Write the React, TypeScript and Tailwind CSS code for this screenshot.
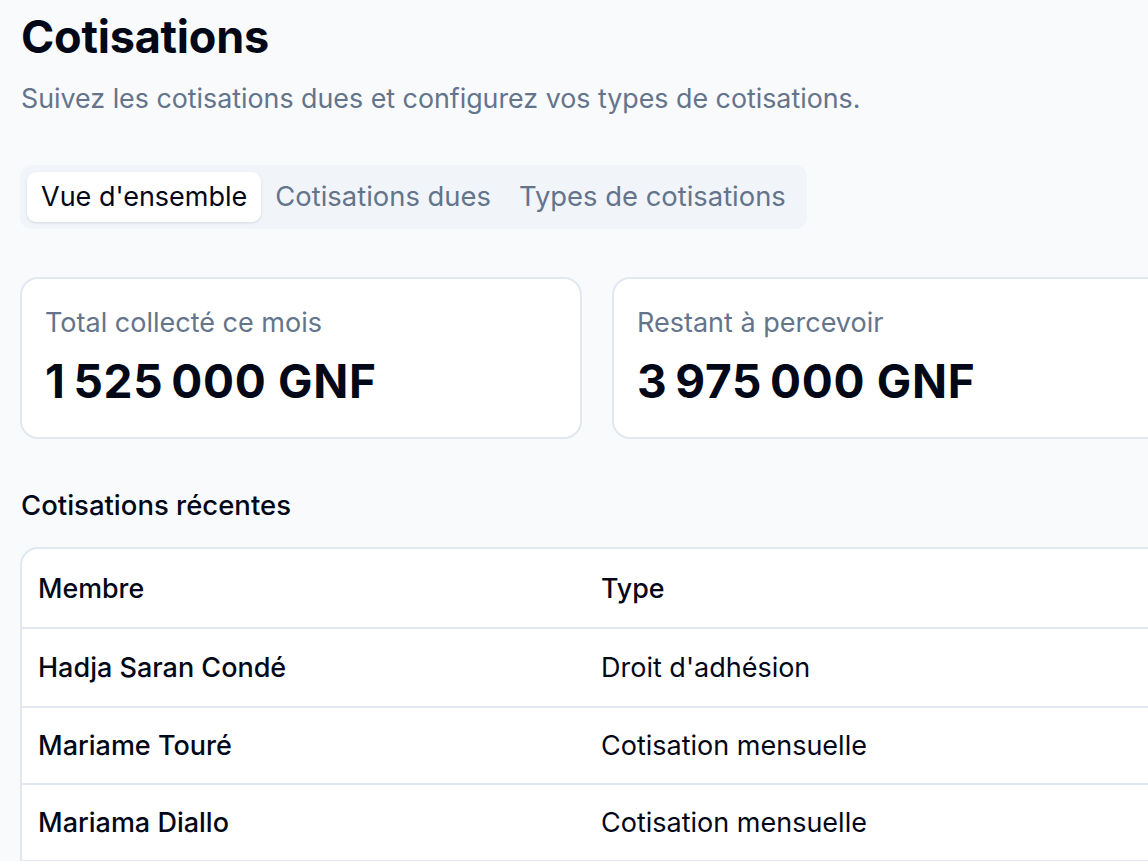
import React from "react";

const rows = [
  { name: "Hadja Saran Condé", type: "Droit d'adhésion", h: "h-[79px]" },
  { name: "Mariame Touré", type: "Cotisation mensuelle", h: "h-[77px]" },
  { name: "Mariama Diallo", type: "Cotisation mensuelle", h: "h-[77px]" },
];

function fmt(n: number) {
  return n.toLocaleString("fr-FR") + " GNF";
}

export default function App() {
  return (
    <div
      className="min-h-screen w-full overflow-hidden bg-[#f8fafc] text-[#020817]"
      style={{ fontFamily: "Inter, 'Noto Sans', sans-serif" }}
    >
      <div className="pl-[20px] pt-[9px] w-[1400px]">
        <h1 className="text-[45px] leading-[56px] font-bold tracking-[-0.005em] pl-[1px]">Cotisations</h1>
        <p className="mt-[15px] text-[26.8px] leading-[36px] text-[#64748b] pl-[1px]">
          Suivez les cotisations dues et configurez vos types de cotisations.
        </p>

        <div className="mt-[49px] inline-flex items-center rounded-[12px] bg-[#f1f5f9] p-[7px]">
          <div className="h-[50px] flex items-center px-[14px] rounded-[9px] bg-white shadow-[0_1px_3px_rgba(0,0,0,0.12)] text-[27px] text-[#020817]">
            Vue d'ensemble
          </div>
          <div className="h-[50px] flex items-center px-[14px] text-[27.4px] text-[#64748b]">
            Cotisations dues
          </div>
          <div className="h-[50px] flex items-center px-[14px] text-[27.4px] text-[#64748b]">
            Types de cotisations
          </div>
        </div>

        <div className="mt-[48px] flex gap-[30px]">
          <div className="w-[562px] h-[162px] rounded-[18px] border-2 border-[#e2e8f0] bg-white px-[23px] pt-[26px]">
            <div className="text-[27px] leading-[36px] text-[#64748b]">Total collecté ce mois</div>
            <div className="mt-[12px] text-[46px] leading-[56px] font-bold tracking-[0.015em]">{fmt(1525000)}</div>
          </div>
          <div className="w-[562px] h-[162px] rounded-[18px] border-2 border-[#e2e8f0] bg-white px-[23px] pt-[26px]">
            <div className="text-[27px] leading-[36px] text-[#64748b]">Restant à percevoir</div>
            <div className="mt-[12px] text-[46px] leading-[56px] font-bold tracking-[0.015em]">{fmt(3975000)}</div>
          </div>
        </div>

        <h2 className="mt-[48px] text-[27.5px] leading-[36px] font-medium pl-[1px]">Cotisations récentes</h2>

        <div className="mt-[24px] w-[1300px] rounded-t-[18px] border-2 border-[#e2e8f0] bg-white">
          <div className="grid grid-cols-[563px_1fr] h-[80px] items-center border-b-2 border-[#e2e8f0] px-[16px] text-[26.8px] font-medium">
            <div>Membre</div>
            <div>Type</div>
          </div>
          {rows.map((r) => (
            <div
              key={r.name}
              className={`grid grid-cols-[563px_1fr] ${r.h} items-center border-b-2 border-[#e2e8f0] px-[16px] pt-[2px] text-[27px]`}
            >
              <div className="font-medium">{r.name}</div>
              <div>{r.type}</div>
            </div>
          ))}
        </div>
      </div>
    </div>
  );
}
